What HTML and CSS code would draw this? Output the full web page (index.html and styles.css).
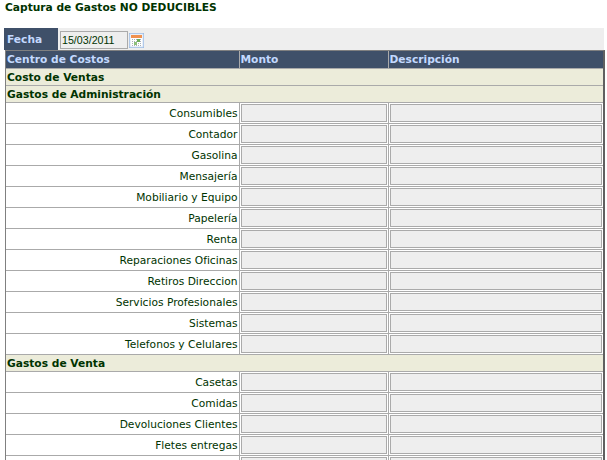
FILE: index.html
```html
<!DOCTYPE html>
<html lang="es">
  <head>
    <meta charset="UTF-8" />
    <title>Captura de Gastos</title>
    <link rel="stylesheet" href="styles.css">
  </head>
  <body>
    <h1 class="title">Captura de Gastos NO DEDUCIBLES</h1>
    <div class="fecha-bar">
      <label class="fecha-label">Fecha</label>
      <input class="fecha-input" type="text" value="15/03/2011" />
      <svg class="cal" width="15" height="15" viewBox="0 0 15 15">
        <rect x="0.5" y="0.5" width="14" height="14" fill="#ffffff" stroke="#8fb0de" />
        <rect x="1" y="1" width="13" height="13" fill="none" stroke="#d3e1f4" />
        <rect x="2" y="2" width="11" height="3" fill="#f0914f" />
        <path d="M3 6.5h9M3 8.5h9M3 10.5h9M3 12.5h9" stroke="#a9b0ba" stroke-width="1" stroke-dasharray="1 1" fill="none" />
        <rect x="8" y="6" width="3" height="3" fill="#6fae5a" />
        <rect x="5" y="9" width="3" height="3" fill="#8dbf7a" />
      </svg>
    </div>
    <div class="tabla-wrap">
      <table class="tabla">
        <colgroup>
          <col class="col-centro" />
          <col class="col-monto" />
          <col />
        </colgroup>
        <thead>
          <tr>
            <th>Centro de Costos</th>
            <th>Monto</th>
            <th>Descripción</th>
          </tr>
        </thead>
        <tbody>
          <tr class="grupo"><td colspan="3">Costo de Ventas</td></tr>
          <tr class="grupo"><td colspan="3">Gastos de Administración</td></tr>
          <tr><td class="concepto">Consumibles</td><td><input type="text" /></td><td><input type="text" /></td></tr>
          <tr><td class="concepto">Contador</td><td><input type="text" /></td><td><input type="text" /></td></tr>
          <tr><td class="concepto">Gasolina</td><td><input type="text" /></td><td><input type="text" /></td></tr>
          <tr><td class="concepto">Mensajería</td><td><input type="text" /></td><td><input type="text" /></td></tr>
          <tr><td class="concepto">Mobiliario y Equipo</td><td><input type="text" /></td><td><input type="text" /></td></tr>
          <tr><td class="concepto">Papelería</td><td><input type="text" /></td><td><input type="text" /></td></tr>
          <tr><td class="concepto">Renta</td><td><input type="text" /></td><td><input type="text" /></td></tr>
          <tr><td class="concepto">Reparaciones Oficinas</td><td><input type="text" /></td><td><input type="text" /></td></tr>
          <tr><td class="concepto">Retiros Direccion</td><td><input type="text" /></td><td><input type="text" /></td></tr>
          <tr><td class="concepto">Servicios Profesionales</td><td><input type="text" /></td><td><input type="text" /></td></tr>
          <tr><td class="concepto">Sistemas</td><td><input type="text" /></td><td><input type="text" /></td></tr>
          <tr><td class="concepto">Telefonos y Celulares</td><td><input type="text" /></td><td><input type="text" /></td></tr>
          <tr class="grupo"><td colspan="3">Gastos de Venta</td></tr>
          <tr><td class="concepto">Casetas</td><td><input type="text" /></td><td><input type="text" /></td></tr>
          <tr><td class="concepto">Comidas</td><td><input type="text" /></td><td><input type="text" /></td></tr>
          <tr><td class="concepto">Devoluciones Clientes</td><td><input type="text" /></td><td><input type="text" /></td></tr>
          <tr><td class="concepto">Fletes entregas</td><td><input type="text" /></td><td><input type="text" /></td></tr>
          <tr><td class="concepto">&nbsp;</td><td><input type="text" /></td><td><input type="text" /></td></tr>
        </tbody>
      </table>
    </div>
  </body>
</html>
```

FILE: styles.css
```css
html,
body {
  height: 460px;
  overflow: hidden;
}
body {
  margin: 0;
  padding-left: 4px;
  background-color: white;
  color: #003300;
  font-family: "DejaVu Sans", Verdana, sans-serif;
  font-size: 8pt;
}
.title {
  margin: 0;
  padding: 1px 0 0 1px;
  height: 27px;
  font-size: 8pt;
  line-height: 13px;
  font-weight: bold;
}
.fecha-bar {
  display: flex;
  align-items: flex-start;
  width: 600px;
  height: 22px;
  background-color: #eeeeee;
}
.fecha-label {
  width: 54px;
  height: 22px;
  padding-left: 3px;
  box-sizing: border-box;
  background-color: #3f5069;
  color: #c3d9ff;
  font-weight: bold;
  line-height: 23px;
}
.fecha-input {
  width: 68px;
  height: 18px;
  margin: 3px 0 0 2px;
  padding: 0 1px;
  box-sizing: border-box;
  border: 1px solid #aaaaaa;
  background-color: #eeeeee;
  color: #003300;
  font: 8pt "Liberation Sans", Arial, sans-serif;
}
.cal {
  margin: 5px 0 0 1px;
}
.tabla-wrap {
  width: 600px;
  margin-left: 1px;
  box-sizing: border-box;
  border-top: 1px solid #808080;
  border-right: 2px solid #606060;
  border-left: 1px solid #808080;
}
.tabla {
  width: 100%;
  table-layout: fixed;
  border-collapse: collapse;
}
.col-centro {
  width: 233px;
}
.col-monto {
  width: 149px;
}
.tabla th,
.tabla td {
  padding: 0;
  border: 1px solid #aaaaaa;
  white-space: nowrap;
}
.tabla tr:first-child th {
  border-top: none;
}
.tabla th:first-child,
.tabla td:first-child {
  border-left: none;
}
.tabla th:last-child,
.tabla td:last-child {
  border-right: none;
}
.tabla th {
  height: 17px;
  padding-left: 1px;
  background-color: #3f5069;
  color: #c3d9ff;
  font-weight: bold;
  text-align: left;
}
.grupo td {
  height: 16px;
  padding-left: 1px;
  background-color: #ececda;
  font-weight: bold;
}
.tabla .concepto {
  height: 20px;
  padding-right: 1px;
  text-align: right;
}
.tabla input {
  display: block;
  width: calc(100% - 2px);
  height: 18px;
  margin: 0 auto;
  padding: 0;
  box-sizing: border-box;
  border: 1px solid #aaaaaa;
  background-color: #eeeeee;
}
```
